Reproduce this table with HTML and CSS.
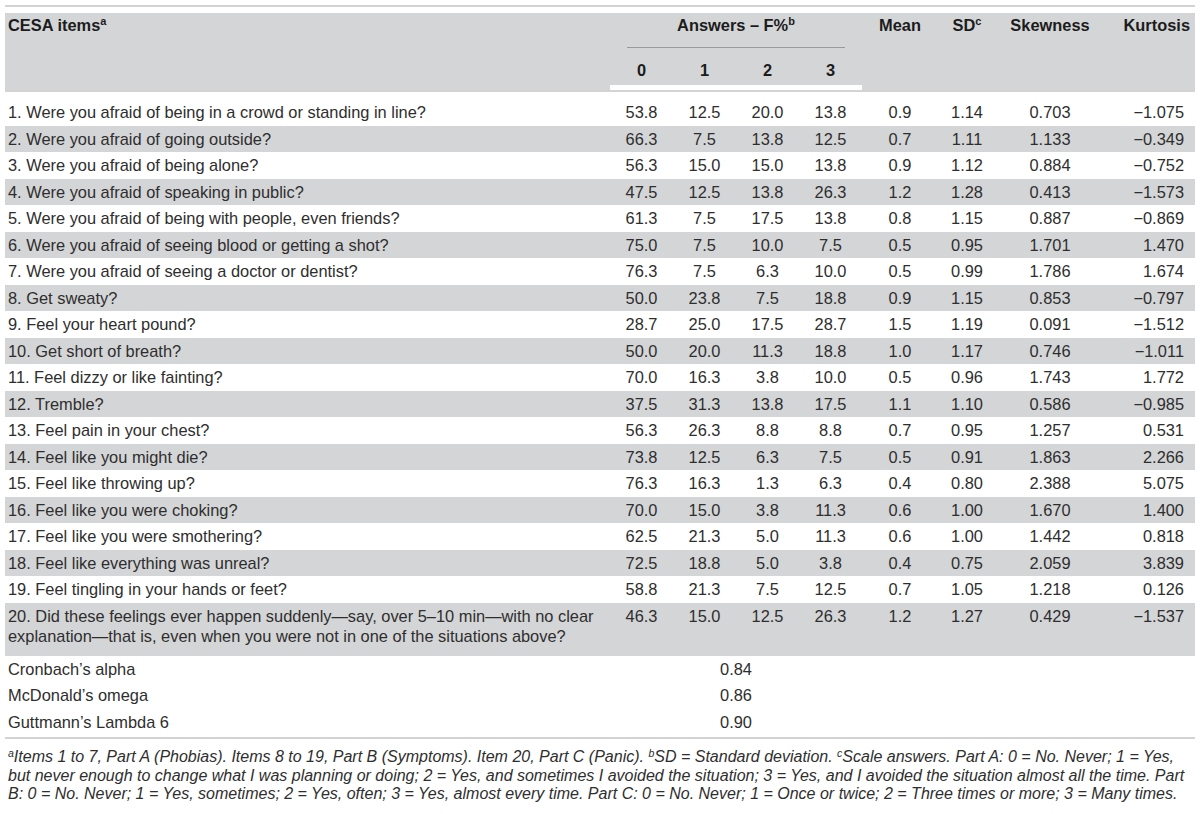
FILE: index.html
```html
<!DOCTYPE html>
<html lang="en">
<head>
<meta charset="utf-8">
<title>CESA items table</title>
<link rel="stylesheet" href="styles.css">
</head>
<body>
<div class="wrap">
<table class="tbl">
<colgroup>
<col class="c-item"><col class="c-ans"><col class="c-ans"><col class="c-ans"><col class="c-ans"><col class="c-mean"><col class="c-sd"><col class="c-skew"><col class="c-kurt">
</colgroup>
<thead>
<tr class="h1">
<th class="item" rowspan="2">CESA items<sup>a</sup></th>
<th class="answers" colspan="4"><div class="ans-label">Answers – F%<sup>b</sup></div></th>
<th rowspan="2">Mean</th>
<th rowspan="2">SD<sup>c</sup></th>
<th rowspan="2">Skewness</th>
<th class="kurt" rowspan="2">Kurtosis</th>
</tr>
<tr class="h2">
<th>0</th><th>1</th><th>2</th><th>3</th>
</tr>
</thead>
<tbody>
<tr class="first"><td class="item">1. Were you afraid of being in a crowd or standing in line?</td><td>53.8</td><td>12.5</td><td>20.0</td><td>13.8</td><td>0.9</td><td>1.14</td><td>0.703</td><td class="kurt">−1.075</td></tr>
<tr class="band"><td class="item">2. Were you afraid of going outside?</td><td>66.3</td><td>7.5</td><td>13.8</td><td>12.5</td><td>0.7</td><td>1.11</td><td>1.133</td><td class="kurt">−0.349</td></tr>
<tr><td class="item">3. Were you afraid of being alone?</td><td>56.3</td><td>15.0</td><td>15.0</td><td>13.8</td><td>0.9</td><td>1.12</td><td>0.884</td><td class="kurt">−0.752</td></tr>
<tr class="band"><td class="item">4. Were you afraid of speaking in public?</td><td>47.5</td><td>12.5</td><td>13.8</td><td>26.3</td><td>1.2</td><td>1.28</td><td>0.413</td><td class="kurt">−1.573</td></tr>
<tr><td class="item">5. Were you afraid of being with people, even friends?</td><td>61.3</td><td>7.5</td><td>17.5</td><td>13.8</td><td>0.8</td><td>1.15</td><td>0.887</td><td class="kurt">−0.869</td></tr>
<tr class="band"><td class="item">6. Were you afraid of seeing blood or getting a shot?</td><td>75.0</td><td>7.5</td><td>10.0</td><td>7.5</td><td>0.5</td><td>0.95</td><td>1.701</td><td class="kurt">1.470</td></tr>
<tr><td class="item">7. Were you afraid of seeing a doctor or dentist?</td><td>76.3</td><td>7.5</td><td>6.3</td><td>10.0</td><td>0.5</td><td>0.99</td><td>1.786</td><td class="kurt">1.674</td></tr>
<tr class="band"><td class="item">8. Get sweaty?</td><td>50.0</td><td>23.8</td><td>7.5</td><td>18.8</td><td>0.9</td><td>1.15</td><td>0.853</td><td class="kurt">−0.797</td></tr>
<tr><td class="item">9. Feel your heart pound?</td><td>28.7</td><td>25.0</td><td>17.5</td><td>28.7</td><td>1.5</td><td>1.19</td><td>0.091</td><td class="kurt">−1.512</td></tr>
<tr class="band"><td class="item">10. Get short of breath?</td><td>50.0</td><td>20.0</td><td>11.3</td><td>18.8</td><td>1.0</td><td>1.17</td><td>0.746</td><td class="kurt">−1.011</td></tr>
<tr><td class="item">11. Feel dizzy or like fainting?</td><td>70.0</td><td>16.3</td><td>3.8</td><td>10.0</td><td>0.5</td><td>0.96</td><td>1.743</td><td class="kurt">1.772</td></tr>
<tr class="band"><td class="item">12. Tremble?</td><td>37.5</td><td>31.3</td><td>13.8</td><td>17.5</td><td>1.1</td><td>1.10</td><td>0.586</td><td class="kurt">−0.985</td></tr>
<tr><td class="item">13. Feel pain in your chest?</td><td>56.3</td><td>26.3</td><td>8.8</td><td>8.8</td><td>0.7</td><td>0.95</td><td>1.257</td><td class="kurt">0.531</td></tr>
<tr class="band"><td class="item">14. Feel like you might die?</td><td>73.8</td><td>12.5</td><td>6.3</td><td>7.5</td><td>0.5</td><td>0.91</td><td>1.863</td><td class="kurt">2.266</td></tr>
<tr><td class="item">15. Feel like throwing up?</td><td>76.3</td><td>16.3</td><td>1.3</td><td>6.3</td><td>0.4</td><td>0.80</td><td>2.388</td><td class="kurt">5.075</td></tr>
<tr class="band"><td class="item">16. Feel like you were choking?</td><td>70.0</td><td>15.0</td><td>3.8</td><td>11.3</td><td>0.6</td><td>1.00</td><td>1.670</td><td class="kurt">1.400</td></tr>
<tr><td class="item">17. Feel like you were smothering?</td><td>62.5</td><td>21.3</td><td>5.0</td><td>11.3</td><td>0.6</td><td>1.00</td><td>1.442</td><td class="kurt">0.818</td></tr>
<tr class="band"><td class="item">18. Feel like everything was unreal?</td><td>72.5</td><td>18.8</td><td>5.0</td><td>3.8</td><td>0.4</td><td>0.75</td><td>2.059</td><td class="kurt">3.839</td></tr>
<tr><td class="item">19. Feel tingling in your hands or feet?</td><td>58.8</td><td>21.3</td><td>7.5</td><td>12.5</td><td>0.7</td><td>1.05</td><td>1.218</td><td class="kurt">0.126</td></tr>
<tr class="band tall"><td class="item">20. Did these feelings ever happen suddenly—say, over 5–10 min—with no clear explanation—that is, even when you were not in one of the situations above?</td><td>46.3</td><td>15.0</td><td>12.5</td><td>26.3</td><td>1.2</td><td>1.27</td><td>0.429</td><td class="kurt">−1.537</td></tr>
<tr><td class="item">Cronbach’s alpha</td><td colspan="4">0.84</td><td></td><td></td><td></td><td></td></tr>
<tr><td class="item">McDonald’s omega</td><td colspan="4">0.86</td><td></td><td></td><td></td><td></td></tr>
<tr class="last"><td class="item">Guttmann’s Lambda 6</td><td colspan="4">0.90</td><td></td><td></td><td></td><td></td></tr>
</tbody>
</table>
<p class="notes"><sup>a</sup>Items 1 to 7, Part A (Phobias). Items 8 to 19, Part B (Symptoms). Item 20, Part C (Panic). <sup>b</sup>SD = Standard deviation. <sup>c</sup>Scale answers. Part A: 0 = No. Never; 1 = Yes, but never enough to change what I was planning or doing; 2 = Yes, and sometimes I avoided the situation; 3 = Yes, and I avoided the situation almost all the time. Part B: 0 = No. Never; 1 = Yes, sometimes; 2 = Yes, often; 3 = Yes, almost every time. Part C: 0 = No. Never; 1 = Once or twice; 2 = Three times or more; 3 = Many times.</p>
</div>
</body>
</html>
```

FILE: styles.css
```css
html, body {
  margin: 0;
  padding: 0;
  background: #ffffff;
}

body {
  font-family: "Liberation Sans", Arial, Helvetica, sans-serif;
  color: #2e2e2e;
}

.wrap {
  margin: 5px;
  border-top: 2px solid #d3d3d3;
  padding-top: 6px;
}

.tbl {
  width: 1190px;
  table-layout: fixed;
  border-collapse: separate;
  border-spacing: 0;
  font-size: 16.4px;
}

.c-item { width: 605px; }
.c-ans { width: 63px; }
.c-mean { width: 76px; }
.c-sd { width: 58px; }
.c-skew { width: 108px; }
.c-kurt { width: 91px; }

.tbl th {
  background: #d4d5d7;
  color: #1c1c1c;
  font-weight: bold;
  text-align: center;
  vertical-align: top;
  line-height: 21px;
  padding: 2px 3px 0 3px;
}

.tbl sup {
  font-size: 11px;
  line-height: 0;
  vertical-align: 6px;
}

.tbl th.item {
  text-align: left;
}

.tbl th.kurt {
  text-align: right;
  padding-right: 5px;
}

.h1 th.answers {
  padding: 2px 17px 0 17px;
}

.ans-label {
  border-bottom: 1px solid #9a9a9a;
  padding-bottom: 11px;
}

.h2 th {
  padding-top: 12px;
  padding-bottom: 4px;
  border-bottom: 5px solid #ffffff;
}

.tbl td {
  line-height: 20.5px;
  padding: 3px 3px;
  text-align: center;
  vertical-align: top;
  white-space: nowrap;
}

.tbl td.item {
  text-align: left;
  white-space: normal;
  padding-right: 4px;
}

.tbl td.kurt {
  text-align: right;
  padding-right: 11px;
}

.tbl tr.first td {
  border-top: 2px solid #d3d3d3;
  padding-top: 10px;
}

.tbl tr.band td {
  background: #d4d5d7;
}

.tbl tr.tall td {
  padding-bottom: 9px;
}

.tbl tr.last td {
  padding-bottom: 5px;
}

.notes {
  margin: 0;
  border-top: 2px solid #d3d3d3;
  padding: 9px 3px 0 3px;
  font-size: 16px;
  line-height: 18.5px;
  font-style: italic;
  color: #2e2e2e;
}

.notes sup {
  font-size: 10.5px;
  line-height: 0;
  vertical-align: 5px;
}
```
